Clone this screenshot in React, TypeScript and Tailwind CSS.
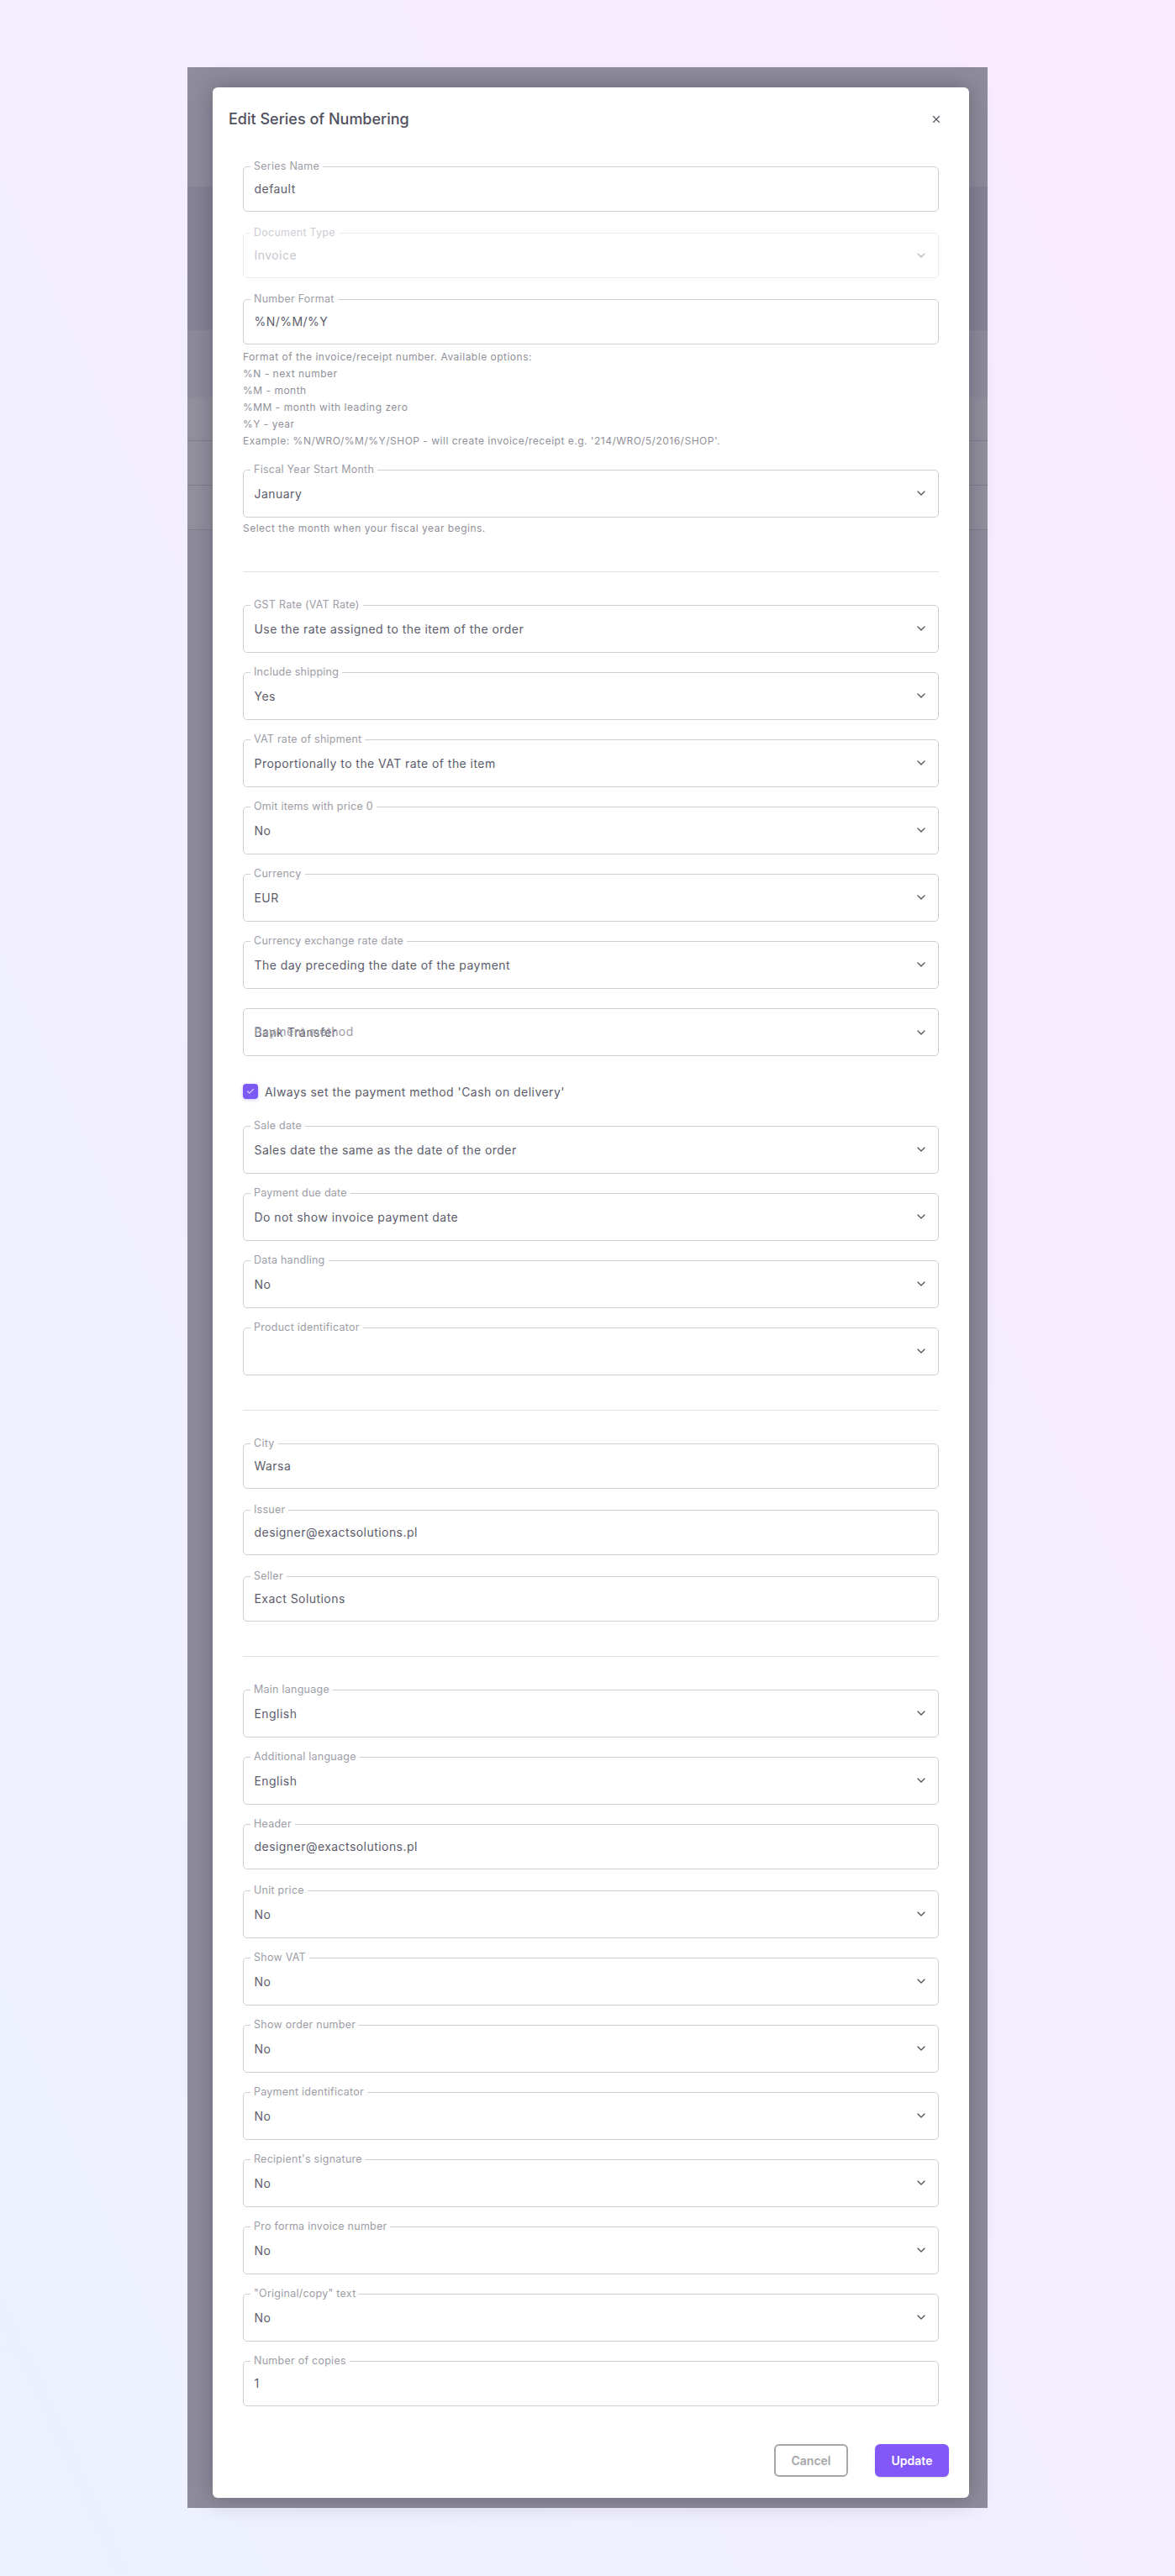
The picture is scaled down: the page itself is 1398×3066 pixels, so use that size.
import React from "react"
import { Check, ChevronDown, X } from "lucide-react"

type FieldProps = {
  label: string
  value?: string
  select?: boolean
  disabled?: boolean
}

const Field: React.FC<FieldProps> = ({ label, value, select, disabled }) => (
  <fieldset
    className={`rounded-[5px] border-[1.5px] min-w-0 ${select && !disabled ? "h-[65px]" : "h-[62px]"} ${
      disabled ? "border-[#ececef]" : "border-[#cdcdd4]"
    } ${select ? "" : "mb-[2px]"} ${disabled ? "mb-[2px]" : ""}`}
  >
    <legend className={`ml-[8px] px-[4px] text-[12.5px] leading-4 tracking-[0.25px] ${disabled ? "text-[#cdcdd4]" : "text-[#9c9ca6]"}`}>
      {label}
    </legend>
    <div className={`flex items-center justify-between pl-[12.5px] pr-[12px] text-[14px] tracking-[0.45px] ${select && !disabled ? "h-[40px]" : "h-[37px]"} ${disabled ? "text-[#c6c6ce]" : "text-[#5c5c6b]"}`}>
      <span>{value}</span>
      {select && <ChevronDown className={`h-4 w-4 ${disabled ? "text-[#b9b9c2]" : "text-[#55555f]"}`} />}
    </div>
  </fieldset>
)

const Divider: React.FC<{ className: string }> = ({ className }) => (
  <div className={`h-px bg-[#e2e2e6] ${className}`} />
)

const helpLines = [
  "Format of the invoice/receipt number. Available options:",
  "%N - next number",
  "%M - month",
  "%MM - month with leading zero",
  "%Y - year",
  "Example: %N/WRO/%M/%Y/SHOP - will create invoice/receipt e.g. '214/WRO/5/2016/SHOP'.",
]

const taxFields = [
  ["GST Rate (VAT Rate)", "Use the rate assigned to the item of the order"],
  ["Include shipping", "Yes"],
  ["VAT rate of shipment", "Proportionally to the VAT rate of the item"],
  ["Omit items with price 0", "No"],
  ["Currency", "EUR"],
  ["Currency exchange rate date", "The day preceding the date of the payment"],
]

const dateFields = [
  ["Sale date", "Sales date the same as the date of the order"],
  ["Payment due date", "Do not show invoice payment date"],
  ["Data handling", "No"],
  ["Product identificator", ""],
]

const printFields = [
  ["Unit price", "No"],
  ["Show VAT", "No"],
  ["Show order number", "No"],
  ["Payment identificator", "No"],
  ["Recipient's signature", "No"],
  ["Pro forma invoice number", "No"],
  ['"Original/copy" text', "No"],
]

// page behind the dimmed overlay, only its edges stay visible
const Backdrop = () => (
  <div className="absolute inset-0 flex flex-col bg-[#8f8d9b]">
    <div className="h-[142px] shrink-0" />
    <div className="h-[171px] shrink-0 bg-[#878497]" />
    <div className="h-[80px] shrink-0 bg-[#8e8c9a]" />
    <div className="h-[52px] shrink-0 border-b border-[#807e8d] bg-[#93919e]" />
    <div className="h-[53px] shrink-0 border-b border-[#807e8d] bg-[#93919e]" />
    <div className="h-[53px] shrink-0 border-b border-[#807e8d] bg-[#93919e]" />
    <div className="flex-1 bg-[#8f8d9b]" />
  </div>
)

export default function App() {
  return (
    <div className="flex min-h-screen justify-center bg-linear-to-tr from-[#ecf1fe] to-[#f9ebfe] pt-[80px] pb-[81px] font-['Inter',sans-serif]">
      <div className="relative w-[952px] pt-[24px] pl-[30px]">
        <Backdrop />
        <div className="relative w-[900px] rounded-[6px] bg-white pb-[25px] shadow-[0_0_28px_rgba(60,55,80,0.45)]">
          <div className="flex items-center justify-between pt-[24px] pl-[19px] pr-[32px]">
            <h2 className="text-[18px] leading-7 font-medium text-[#50505f]">Edit Series of Numbering</h2>
            <X className="h-[14px] w-[14px] text-[#55555f]" strokeWidth={2} />
          </div>

          <div className="mt-[34px] flex flex-col gap-[15px] px-[36px]">
            <Field label="Series Name" value="default" />
            <Field label="Document Type" value="Invoice" select disabled />
            <div className="mb-px">
              <Field label="Number Format" value="%N/%M/%Y" />
              <div className="mt-[5px] text-[12px] leading-5 tracking-[0.5px] text-[#8f8f9a]">
                {helpLines.map((line) => (
                  <p key={line}>{line}</p>
                ))}
              </div>
            </div>
            <div>
              <Field label="Fiscal Year Start Month" value="January" select />
              <p className="mt-[3px] text-[12px] leading-5 tracking-[0.5px] text-[#8f8f9a]">Select the month when your fiscal year begins.</p>
            </div>
          </div>

          <div className="px-[36px]">
            <Divider className="mt-[41px] mb-[31px]" />
            <div className="flex flex-col gap-[15px]">
              {taxFields.map(([label, value]) => (
                <Field key={label} label={label} value={value} select />
              ))}

              <div className="relative mt-[8px] flex h-[57px] items-center justify-between rounded-[5px] border-[1.5px] border-[#cdcdd4] pl-[12.5px] pr-[12px] text-[14px] tracking-[0.45px] text-[#5c5c6b]">
                <span>Bank Transfer</span>
                <span className="absolute left-[12.5px] top-[16px] text-[#9c9ca6]">Payment method</span>
                <ChevronDown className="h-4 w-4 text-[#55555f]" />
              </div>

              <label className="mt-[18px] mb-[9px] flex h-[18px] items-center gap-[8px] text-[14px] tracking-[0.45px] text-[#5c5c6b]">
                <span className="flex h-[18px] w-[18px] items-center justify-center rounded-[4px] bg-[#7c59f5] shadow-[0_1px_4px_rgba(124,89,245,0.35)]">
                  <Check className="h-[10px] w-[10px] text-[#d9ceff]" strokeWidth={3} />
                </span>
                Always set the payment method 'Cash on delivery'
              </label>

              {dateFields.map(([label, value]) => (
                <Field key={label} label={label} value={value} select />
              ))}
            </div>

            <Divider className="mt-[41px] mb-[31px]" />
            <div className="flex flex-col gap-[15px]">
              <Field label="City" value="Warsa" />
              <Field label="Issuer" value="designer@exactsolutions.pl" />
              <Field label="Seller" value="Exact Solutions" />
            </div>

            <Divider className="mt-[39px] mb-[31px]" />
            <div className="flex flex-col gap-[15px]">
              <Field label="Main language" value="English" select />
              <Field label="Additional language" value="English" select />
              <Field label="Header" value="designer@exactsolutions.pl" />
              {printFields.map(([label, value]) => (
                <Field key={label} label={label} value={value} select />
              ))}
              <Field label="Number of copies" value="1" />
            </div>
          </div>

          <div className="mt-[43px] flex justify-end gap-[32px] pr-[24px]">
            <button className="h-[39px] w-[88px] rounded-[6px] border-2 border-[#a5a5aa] text-[14px] font-semibold text-[#a5a5aa]">Cancel</button>
            <button className="h-[39px] w-[88px] rounded-[6px] bg-[#8258f8] text-[14px] font-semibold text-white shadow-sm">Update</button>
          </div>
        </div>
      </div>
    </div>
  )
}
